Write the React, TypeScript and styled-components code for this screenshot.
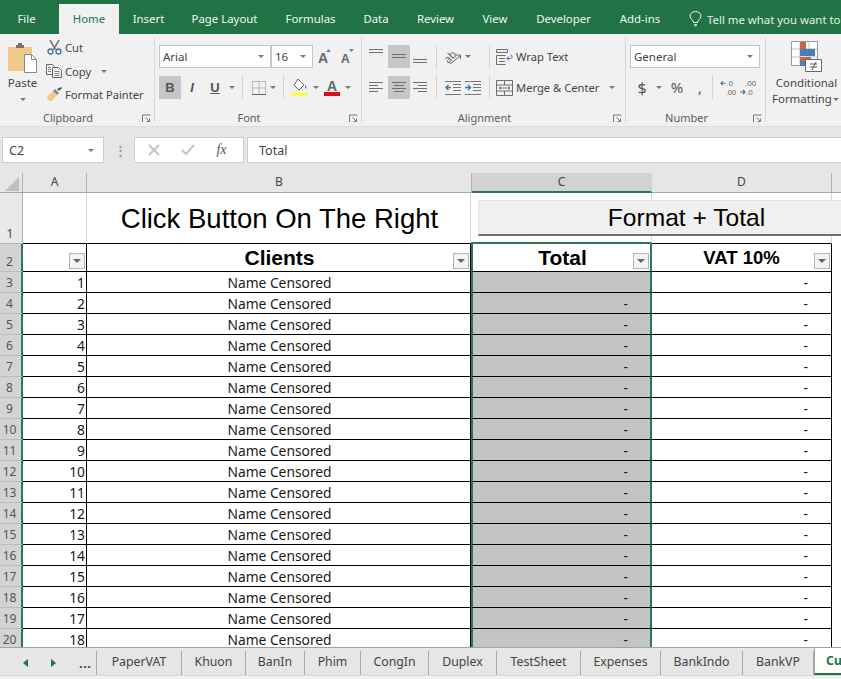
import React from "react";
import styled, { createGlobalStyle } from "styled-components";

const UI_FONT = `"Noto Sans", "Open Sans", sans-serif`;
const GREEN = "#217346";
const SELECT_GREEN = "#2f7653";

const Global = createGlobalStyle`
  html, body { margin: 0; padding: 0; height: 100%; overflow: hidden; background: #f1f1f1; }
  * { box-sizing: border-box; }
`;

const Page = styled.div`
  width: 841px;
  height: 679px;
  overflow: hidden;
  display: flex;
  flex-direction: column;
  font-family: ${UI_FONT};
  color: #444;
`;

/* ---------- title tabs ---------- */
const TabBar = styled.div`
  height: 34px;
  flex: none;
  background: ${GREEN};
  display: flex;
  align-items: flex-end;
  white-space: nowrap;
  overflow: hidden;
`;

const MenuTab = styled.div<{ $w: number; $active?: boolean; $after?: number }>`
  width: ${(p) => p.$w}px;
  height: 30px;
  flex: none;
  margin-right: ${(p) => p.$after ?? 0}px;
  text-align: center;
  font-size: 11.4px;
  line-height: 29px;
  color: ${(p) => (p.$active ? GREEN : "#f2f7f4")};
  background: ${(p) => (p.$active ? "#f1f1f1" : "transparent")};
`;

const TellMe = styled.div`
  display: flex;
  align-items: center;
  gap: 5px;
  height: 30px;
  margin-left: 15px;
  font-size: 11.4px;
  color: #e6f0ea;
`;

/* ---------- ribbon ---------- */
const Ribbon = styled.div`
  height: 93px;
  flex: none;
  background: #f1f1f1;
  border-bottom: 1px solid #dcdcdc;
  display: flex;
  overflow: hidden;
`;

const Group = styled.div<{ $w: number }>`
  position: relative;
  width: ${(p) => p.$w}px;
  height: 84px;
  margin-top: 4px;
  flex: none;
  border-right: 1px solid #d6d6d6;
`;

const GroupBody = styled.div`
  height: 72px;
  display: flex;
`;

const GroupLabel = styled.div`
  height: 12px;
  padding-right: 18px;
  line-height: 16px;
  font-size: 11px;
  text-align: center;
  color: #5c5c5c;
`;

const Launcher = styled.svg`
  position: absolute;
  right: 3px;
  bottom: -1px;
`;

const ToolStack = styled.div<{ $left: number }>`
  padding: 7px 0 0 ${(p) => p.$left}px;
  display: flex;
  flex-direction: column;
  gap: 8px;
`;

const ToolRow = styled.div`
  height: 23px;
  display: flex;
  align-items: center;
`;

const Tool = styled.div<{ $w: number; $on?: boolean }>`
  width: ${(p) => p.$w}px;
  height: 23px;
  flex: none;
  display: flex;
  align-items: center;
  justify-content: center;
  background: ${(p) => (p.$on ? "#c6c6c6" : "transparent")};
`;

const Caret = styled.span<{ $w?: number }>`
  width: ${(p) => p.$w ?? 10}px;
  flex: none;
  display: flex;
  justify-content: center;
  &::before {
    content: "";
    border-left: 3px solid transparent;
    border-right: 3px solid transparent;
    border-top: 3px solid #777;
  }
`;

const Divider = styled.span<{ $gapL: number; $gapR: number }>`
  width: 1px;
  height: 23px;
  flex: none;
  margin: 0 ${(p) => p.$gapR}px 0 ${(p) => p.$gapL}px;
  background: #d2d2d2;
`;

const ComboBox = styled.div<{ $w: number }>`
  width: ${(p) => p.$w}px;
  height: 23px;
  flex: none;
  display: flex;
  align-items: center;
  justify-content: space-between;
  padding: 0 6px 0 3px;
  background: #fff;
  border: 1px solid #c6c6c6;
  font-size: 11.5px;
  color: #444;
`;

const PasteButton = styled.div`
  width: 45px;
  flex: none;
  padding-top: 4px;
  display: flex;
  flex-direction: column;
  align-items: center;
  font-size: 11.5px;
  line-height: 16px;
`;

const PasteText = styled.span`
  margin-top: 2px;
  margin-bottom: 7px;
`;

const ClipList = styled.div`
  margin-top: -2px;
  display: flex;
  flex-direction: column;
`;

const ClipItem = styled.div`
  height: 23.5px;
  display: flex;
  align-items: center;
  font-size: 11.2px;
  white-space: nowrap;
`;

const ClipIcon = styled.span`
  width: 20px;
  flex: none;
  display: flex;
  justify-content: center;
  padding-right: 2px;
`;

const WideLabel = styled.span`
  font-size: 11.2px;
  white-space: nowrap;
  margin-left: 3px;
`;

const BigButton = styled.div`
  width: 75px;
  padding: 7px 0 0 6px;
  display: flex;
  flex-direction: column;
  align-items: center;
  font-size: 11.4px;
  line-height: 16px;
  white-space: nowrap;
`;

const BigIcon = styled.svg`
  margin-bottom: 3px;
`;

const BigLine = styled.span`
  display: flex;
  align-items: center;
`;

const MathGlyph = styled.span<{ $size: number }>`
  font-size: ${(p) => p.$size}px;
  line-height: 1;
  color: #555;
`;

const FontLetter = styled.span<{ $italic?: boolean; $under?: boolean }>`
  font-family: "Liberation Sans", Arial, sans-serif;
  font-size: 13px;
  font-weight: 700;
  font-style: ${(p) => (p.$italic ? "italic" : "normal")};
  text-decoration: ${(p) => (p.$under ? "underline" : "none")};
  color: #555;
`;

const OrientSvg = styled.svg`
  overflow: visible;
`;

/* ---------- formula bar ---------- */
const FormulaBar = styled.div`
  height: 46px;
  flex: none;
  background: #e6e6e6;
  padding: 10px 0 10px 2px;
  display: flex;
`;

const FieldBox = styled.div`
  background: #fff;
  border: 1px solid #d0d0d0;
  display: flex;
  align-items: center;
  font-size: 12.5px;
  color: #444;
`;

const NameBox = styled(FieldBox)`
  width: 102px;
  justify-content: space-between;
  padding: 0 7px 0 6px;
`;

const Grip = styled.div`
  width: 30px;
  display: flex;
  justify-content: center;
  align-items: center;
  padding-left: 2px;
  font-size: 13px;
  color: #9c9c9c;
  font-weight: 700;
`;

const FxBox = styled(FieldBox)`
  width: 110px;
  justify-content: space-around;
  padding: 0 6px 0 3px;
  margin-right: 3px;
`;

const FormulaInput = styled(FieldBox)`
  flex: 1;
  padding-left: 11px;
  border-right: none;
`;

const FxText = styled.span`
  font-family: "Liberation Serif", serif;
  font-style: italic;
  font-weight: 400;
  font-size: 14px;
  color: #555;
`;

/* ---------- sheet ---------- */
const Sheet = styled.div`
  height: 474px;
  flex: none;
  overflow: hidden;
  background: #fff;
`;

const ColHeaders = styled.div`
  height: 20px;
  display: flex;
  background: #e6e6e6;
  border-bottom: 1px solid #a6a6a6;
  font-size: 12px;
  color: #444;
`;

const ColHead = styled.div<{ $w: number; $on?: boolean }>`
  width: ${(p) => p.$w}px;
  flex: none;
  height: ${(p) => (p.$on ? "20px" : "19px")};
  line-height: 18px;
  text-align: center;
  border-right: 1px solid ${(p) => (p.$on ? "#d2d2d2" : "#b4b4b4")};
  background: ${(p) => (p.$on ? "#d2d2d2" : "transparent")};
  border-bottom: ${(p) => (p.$on ? `2px solid ${SELECT_GREEN}` : "none")};
`;

const CornerHead = styled(ColHead)`
  display: flex;
  align-items: flex-end;
  justify-content: flex-end;
  padding: 0 3px 1px 0;
`;

const Row = styled.div<{ $h: number }>`
  height: ${(p) => p.$h}px;
  display: flex;
  position: relative;
`;

const RowHead = styled.div<{ $on?: boolean }>`
  width: 23px;
  flex: none;
  display: flex;
  align-items: flex-end;
  justify-content: center;
  font-size: 12px;
  line-height: 18px;
  padding-right: 2px;
  color: ${(p) => (p.$on ? "#555" : "#444")};
  background: ${(p) => (p.$on ? "#d3d3d3" : "#e9e9e9")};
  border-right: ${(p) => (p.$on ? `2px solid ${SELECT_GREEN}` : "1px solid #b4b4b4")};
  border-bottom: 1px solid ${(p) => (p.$on ? "#bcbcbc" : "#b4b4b4")};
`;

const Cell = styled.div<{ $w: number; $soft?: boolean }>`
  position: relative;
  width: ${(p) => p.$w}px;
  flex: none;
  border-right: 1px solid ${(p) => (p.$soft ? "#d4d4d4" : "#000")};
  border-bottom: 1px solid #000;
  display: flex;
  align-items: center;
  justify-content: center;
  font-size: 13.8px;
  color: #1a1a1a;
  white-space: nowrap;
`;

const NameCell = styled(Cell)`
  padding-left: 2px;
`;

const TitleCell = styled(NameCell)`
  padding-top: 2px;
`;

const NumberCell = styled(Cell)`
  justify-content: flex-end;
  padding-right: 1px;
`;

const AmountCell = styled(Cell)`
  justify-content: flex-end;
  padding-right: 23px;
`;

const SelectedCell = styled(AmountCell)<{ $fill?: boolean }>`
  padding-right: 22px;
  background: ${(p) => (p.$fill ? "#c4c4c4" : "#fff")};
  border-left: 2px solid ${SELECT_GREEN};
  border-right: 2px solid ${SELECT_GREEN};
`;

const HeadCentered = styled(SelectedCell)`
  justify-content: center;
  padding: 0 0 0 2px;
`;

const TopOfSelection = styled(Cell)`
  border-bottom: 2px solid ${SELECT_GREEN};
`;

const HeadText = styled.span<{ $size: number }>`
  font-family: "Liberation Sans", Arial, sans-serif;
  font-weight: 700;
  font-size: ${(p) => p.$size}px;
  color: #000;
`;

const TitleText = styled.span`
  font-family: "Liberation Sans", Arial, sans-serif;
  font-size: 27.5px;
  color: #000;
`;

const FilterButton = styled.span`
  position: absolute;
  right: 1px;
  bottom: 2px;
  width: 16px;
  height: 16px;
  background: #f4f4f4;
  border: 1px solid #b4b4b4;
  display: flex;
  align-items: center;
  justify-content: center;
  &::before {
    content: "";
    border-left: 4px solid transparent;
    border-right: 4px solid transparent;
    border-top: 4px solid #666;
  }
`;

const MacroButton = styled.div`
  position: absolute;
  left: 478px;
  top: 7px;
  width: 416px;
  height: 36px;
  display: flex;
  align-items: center;
  justify-content: center;
  background: #f0f0f0;
  border-top: 1px solid #e4e4e4;
  border-left: 1px solid #e4e4e4;
  border-bottom: 2px solid #6e6e6e;
  font-family: "Liberation Sans", Arial, sans-serif;
  font-size: 24.6px;
  color: #000;
`;

/* ---------- sheet tabs ---------- */
const SheetTabs = styled.div`
  height: 28px;
  flex: none;
  background: #e6e6e6;
  border-top: 1px solid #a2a2a2;
  display: flex;
  overflow: hidden;
`;

const TabNav = styled.div`
  width: 97px;
  height: 24px;
  flex: none;
  display: flex;
  align-items: center;
  padding-left: 23px;
  color: ${GREEN};
  font-size: 9px;
  border-right: 1px solid #a8a8a8;
  margin-top: 3px;
`;

const NavArrow = styled.span<{ $dir: "l" | "r" }>`
  width: 28px;
  &::before {
    content: "";
    display: inline-block;
    border-top: 4px solid transparent;
    border-bottom: 4px solid transparent;
    ${(p) => (p.$dir === "l" ? `border-right: 5px solid ${GREEN};` : `border-left: 5px solid ${GREEN};`)}
  }
`;

const NavDots = styled.span`
  font-size: 13px;
  font-weight: 700;
  color: #444;
  letter-spacing: 0.5px;
`;

const SheetTab = styled.div<{ $w: number }>`
  width: ${(p) => p.$w}px;
  height: 24px;
  margin-top: 3px;
  flex: none;
  text-align: center;
  font-size: 12.3px;
  line-height: 22px;
  color: #444;
  border-right: 1px solid #a8a8a8;
`;

const ActiveSheet = styled.div`
  flex: 1;
  height: 27px;
  background: #fff;
  border-left: 1px solid #a2a2a2;
  border-bottom: 2px solid ${GREEN};
  padding-left: 11px;
  font-size: 12.3px;
  line-height: 26px;
  font-weight: 700;
  color: ${GREEN};
  white-space: nowrap;
`;

const StatusStrip = styled.div`
  flex: 1;
  background: #f1f1f1;
  border-top: 1px solid #d8d8d8;
`;

/* ---------- drawn icons ---------- */
const LauncherIcon = () => (
  <Launcher width="9" height="9" viewBox="0 0 9 9" fill="none" stroke="#777">
    <path d="M8.5 1H.5v7" />
    <path d="M3.5 3.5 7.5 7.5M7.5 4.5v3h-3" />
  </Launcher>
);

const Bulb = () => (
  <svg width="13" height="16" viewBox="0 0 13 16" fill="none" stroke="#eef5f0">
    <path d="M4.5 11.5C4.5 9 1 8 1 5a5.500 4.500 0 0 1 11 0c0 3-3.500 4-3.500 6.500z" />
    <path d="M5 13.500h3M5.500 15h2" />
  </svg>
);

const PasteIcon = () => (
  <svg width="29" height="31" viewBox="0 0 29 31">
    <path d="M0 5h24v24H0z" fill="#efca8b" />
    <path d="M8 3h2V1h4v2h2v3H8z" fill="#747474" />
    <path d="M16.500 12.500h7l5 5v13h-12z" fill="#fff" stroke="#8a8a8a" />
    <path d="M23.500 12.500v5h5" fill="none" stroke="#8a8a8a" />
  </svg>
);

const ScissorsIcon = () => (
  <svg width="15" height="15" viewBox="0 0 15 15" fill="none">
    <path d="M3 0 8.500 9.500M12 0 6.500 9.500" stroke="#777" strokeWidth="1.500" />
    <circle cx="3.500" cy="11.500" r="2.500" stroke="#44709f" strokeWidth="1.300" />
    <circle cx="11.500" cy="11.500" r="2.500" stroke="#44709f" strokeWidth="1.300" />
  </svg>
);

const CopyIcon = () => (
  <svg width="16" height="14" viewBox="0 0 16 14" fill="#f1f1f1" stroke="#666">
    <path d="M.5.500h6l2 2v8h-8z" />
    <path d="M6.500 3.500h6l3 3v7h-9z" />
    <path d="M2 3.500h3M2 5.500h3M2 7.500h3M8.500 7.500h5M8.500 9.500h5M8.500 11.500h5" strokeWidth=".8" />
  </svg>
);

const BrushIcon = () => (
  <svg width="17" height="15" viewBox="0 0 17 15">
    <path d="M0 11 7 4l4 4-5 6H3l-1-2z" fill="#efca8b" />
    <path d="M7 4l4 4 2-2-4-4z" fill="#888" />
    <path d="M11 2l2 2 3-3-1-1z" fill="#555" />
  </svg>
);

const GrowFont = ({ up }: { up: boolean }) => (
  <svg width="14" height="17" viewBox="0 0 14 17">
    <text
      x="0"
      y="15"
      fontFamily="Liberation Sans, sans-serif"
      fontSize={up ? 14 : 12}
      fontWeight="700"
      fill="#666"
    >
      A
    </text>
    <path d={up ? "M8 4l2.500-3L13 4z" : "M8 1l2.500 3L13 1z"} fill="#5b87b4" />
  </svg>
);

const BordersIcon = () => (
  <svg width="14" height="14" viewBox="0 0 14 14" fill="none" stroke="#8a8a8a" strokeDasharray="1 1">
    <path d="M.5.500h13M.5 7h13M.5.500v13M7 .500v13M13.500.500v13" />
    <path d="M0 13.500h14" stroke="#666" strokeDasharray="none" />
  </svg>
);

const FillIcon = () => (
  <svg width="18" height="19" viewBox="0 0 18 19">
    <path d="M7 1l6 6-5 5-5-5z" fill="#fff" stroke="#666" />
    <path d="M14 7c1.500 1.500 2 3 1 4-1-1-1-3-1-4z" fill="#3f75a8" />
    <path d="M0 15h16v3H0z" fill="#ffff35" />
  </svg>
);

const FontColorIcon = () => (
  <svg width="16" height="18" viewBox="0 0 16 18">
    <text x="3" y="12" fontFamily="Liberation Sans, sans-serif" fontSize="14" fontWeight="700" fill="#666">
      A
    </text>
    <path d="M0 13h16v4H0z" fill="#dd0c1c" />
  </svg>
);

const lineSets: Record<string, string> = {
  top: "M0 1.500h14M0 4.500h14",
  middle: "M1 6.500h14M1 9.500h14",
  bottom: "M0 11.500h14M0 14.500h14",
  left: "M0 3.500h14M0 6.500h9M0 9.500h14M0 12.500h9",
  center: "M1 3.500h14M3 6.500h10M1 9.500h14M3 12.500h10",
  right: "M0 3.500h14M5 6.500h9M0 9.500h14M5 12.500h9",
};

const AlignIcon = ({ kind }: { kind: string }) => (
  <svg width="16" height="17" viewBox="0 0 16 17" fill="none" stroke="#6e6e6e">
    <path d={lineSets[kind]} />
  </svg>
);

const OrientIcon = () => (
  <OrientSvg width="18" height="20" viewBox="0 0 18 20" fill="none">
    <text
      x="0"
      y="13"
      fontSize="11"
      fontFamily="Noto Sans, sans-serif"
      fill="#666"
      transform="rotate(-45 7 10)"
    >
      ab
    </text>
    <path d="M6 17 16 9M12 8h4.500v4" stroke="#666" />
  </OrientSvg>
);

const IndentIcon = ({ out }: { out: boolean }) => (
  <svg width="16" height="16" viewBox="0 0 16 16" fill="none" stroke="#777">
    <path d="M0 1.500h16M8 4.500h8M8 7.500h8M8 10.500h8M0 14.500h16" />
    <path
      d={out ? "M6 7.500H1M3.500 5 1 7.500 3.500 10" : "M0 7.500h5M3 5l2.500 2.500L3 10"}
      stroke="#3f75a8"
      strokeWidth="1.400"
    />
  </svg>
);

const WrapIcon = () => (
  <svg width="17" height="16" viewBox="0 0 17 16" fill="none" stroke="#6e6e6e">
    <path d="M.5.500h11v3H.5zM.5 6.500h9M.5 6.500v9h9M3 9.500h6M3 12.500h6" />
    <path d="M11 9.500h3.500c2 0 2-3.500 0-3.500M13 7.500l-2 2 2 2" stroke="#3f75a8" />
  </svg>
);

const MergeIcon = () => (
  <svg width="17" height="16" viewBox="0 0 17 16" fill="none" stroke="#6e6e6e">
    <path d="M.5.500h16v15H.5zM.5 5h16M.5 11h16M8.500.500V5M8.500 11v4.500" />
    <path d="M3 8h11M5 6.500 3 8l2 1.500M12 6.500 14 8l-2 1.500" strokeWidth=".9" />
  </svg>
);

const DecimalIcon = ({ more }: { more: boolean }) => (
  <svg width="17" height="19" viewBox="0 0 17 19">
    <text x={more ? 7 : 6} y="8" fontSize="8" fontFamily="Liberation Sans, sans-serif" fill="#666">
      {more ? ".0" : ".00"}
    </text>
    <text x={more ? 6 : 7} y="17" fontSize="8" fontFamily="Liberation Sans, sans-serif" fill="#666">
      {more ? ".00" : ".0"}
    </text>
    <path
      d={more ? "M6 5H1M3 3 1 5l2 2" : "M1 14h5M4 12l2 2-2 2"}
      fill="none"
      stroke="#3f75a8"
      strokeWidth="1.200"
    />
  </svg>
);

const ConditionalIcon = () => (
  <BigIcon width="31" height="31" viewBox="0 0 31 31">
    <path d="M.5.500h26v24H.5z" fill="#fff" stroke="#999" />
    <path d="M9 .500v24M18 .500v24M.5 8h26M.5 16h26" stroke="#bbb" fill="none" />
    <path d="M9 1h6v7H9z" fill="#c8654a" />
    <path d="M9 8h15v7H9z" fill="#4a7ebb" />
    <path d="M9 16h11v4H9z" fill="#c8654a" />
    <path d="M9 20h6v5H9z" fill="#4a7ebb" />
    <path d="M14.500 18.500h16v12h-16z" fill="#fff" stroke="#666" />
    <path d="M19 23h7M19 26h7M25 21l-4 8" stroke="#555" fill="none" />
  </BigIcon>
);

const CheckMark = () => (
  <svg width="14" height="12" viewBox="0 0 14 12" fill="none" stroke="#c4c4c4" strokeWidth="2">
    <path d="M1 6l4 4 8-9" />
  </svg>
);

const CrossMark = () => (
  <svg width="12" height="12" viewBox="0 0 12 12" fill="none" stroke="#c4c4c4" strokeWidth="2">
    <path d="M1 1l10 10M11 1 1 11" />
  </svg>
);

const SelectAll = () => (
  <svg width="14" height="14" viewBox="0 0 14 14">
    <path d="M14 0v14H0z" fill="#c0c0c0" />
  </svg>
);

/* ---------- data ---------- */
const menu = [
  { label: "File", w: 53, after: 6 },
  { label: "Home", w: 60, active: true },
  { label: "Insert", w: 59 },
  { label: "Page Layout", w: 93 },
  { label: "Formulas", w: 79 },
  { label: "Data", w: 52 },
  { label: "Review", w: 67 },
  { label: "View", w: 52 },
  { label: "Developer", w: 85 },
  { label: "Add-ins", w: 68 },
];

const sheets = [
  { name: "PaperVAT", w: 85 },
  { name: "Khuon", w: 64 },
  { name: "BanIn", w: 59 },
  { name: "Phim", w: 56 },
  { name: "CongIn", w: 68 },
  { name: "Duplex", w: 68 },
  { name: "TestSheet", w: 84 },
  { name: "Expenses", w: 80 },
  { name: "BankIndo", w: 82 },
  { name: "BankVP", w: 71 },
];

const dataRows = Array.from({ length: 18 }, (_, i) => i + 1);

const COL = { a: 64, b: 384, c: 181, d: 180, e: 40 };

export default function App() {
  return (
    <Page>
      <Global />
      <TabBar>
        {menu.map((m) => (
          <MenuTab key={m.label} $w={m.w} $after={m.after} $active={m.active}>
            {m.label}
          </MenuTab>
        ))}
        <TellMe>
          <Bulb />
          Tell me what you want to do
        </TellMe>
      </TabBar>

      <Ribbon>
        <Group $w={155}>
          <GroupBody>
            <PasteButton>
              <PasteIcon />
              <PasteText>Paste</PasteText>
              <Caret />
            </PasteButton>
            <ClipList>
              <ClipItem>
                <ClipIcon>
                  <ScissorsIcon />
                </ClipIcon>
                Cut
              </ClipItem>
              <ClipItem>
                <ClipIcon>
                  <CopyIcon />
                </ClipIcon>
                Copy
                <Caret $w={26} />
              </ClipItem>
              <ClipItem>
                <ClipIcon>
                  <BrushIcon />
                </ClipIcon>
                Format Painter
              </ClipItem>
            </ClipList>
          </GroupBody>
          <GroupLabel>Clipboard</GroupLabel>
          <LauncherIcon />
        </Group>

        <Group $w={207}>
          <GroupBody>
            <ToolStack $left={4}>
              <ToolRow>
                <ComboBox $w={112}>
                  Arial
                  <Caret $w={6} />
                </ComboBox>
                <ComboBox $w={42}>
                  16
                  <Caret $w={6} />
                </ComboBox>
                <Tool $w={23}>
                  <GrowFont up />
                </Tool>
                <Tool $w={23}>
                  <GrowFont up={false} />
                </Tool>
              </ToolRow>
              <ToolRow>
                <Tool $w={22} $on>
                  <FontLetter>B</FontLetter>
                </Tool>
                <Tool $w={22}>
                  <FontLetter $italic>I</FontLetter>
                </Tool>
                <Tool $w={24}>
                  <FontLetter $under>U</FontLetter>
                </Tool>
                <Caret $w={10} />
                <Divider $gapL={5} $gapR={8} />
                <Tool $w={15}>
                  <BordersIcon />
                </Tool>
                <Caret $w={14} />
                <Divider $gapL={3} $gapR={7} />
                <Tool $w={18}>
                  <FillIcon />
                </Tool>
                <Caret $w={14} />
                <Tool $w={18}>
                  <FontColorIcon />
                </Tool>
                <Caret $w={14} />
              </ToolRow>
            </ToolStack>
          </GroupBody>
          <GroupLabel>Font</GroupLabel>
          <LauncherIcon />
        </Group>

        <Group $w={264}>
          <GroupBody>
            <ToolStack $left={4}>
              <ToolRow>
                <Tool $w={22}>
                  <AlignIcon kind="top" />
                </Tool>
                <Tool $w={22} $on>
                  <AlignIcon kind="middle" />
                </Tool>
                <Tool $w={22}>
                  <AlignIcon kind="bottom" />
                </Tool>
                <Divider $gapL={4} $gapR={7} />
                <Tool $w={18}>
                  <OrientIcon />
                </Tool>
                <Caret $w={12} />
                <Divider $gapL={15} $gapR={6} />
                <WrapIcon />
                <WideLabel>Wrap Text</WideLabel>
              </ToolRow>
              <ToolRow>
                <Tool $w={22}>
                  <AlignIcon kind="left" />
                </Tool>
                <Tool $w={22} $on>
                  <AlignIcon kind="center" />
                </Tool>
                <Tool $w={22}>
                  <AlignIcon kind="right" />
                </Tool>
                <Divider $gapL={4} $gapR={7} />
                <Tool $w={18}>
                  <IndentIcon out />
                </Tool>
                <Tool $w={22}>
                  <IndentIcon out={false} />
                </Tool>
                <Divider $gapL={5} $gapR={6} />
                <MergeIcon />
                <WideLabel>Merge &amp; Center</WideLabel>
                <Caret $w={26} />
              </ToolRow>
            </ToolStack>
          </GroupBody>
          <GroupLabel>Alignment</GroupLabel>
          <LauncherIcon />
        </Group>

        <Group $w={140}>
          <GroupBody>
            <ToolStack $left={4}>
              <ToolRow>
                <ComboBox $w={130}>
                  General
                  <Caret $w={6} />
                </ComboBox>
              </ToolRow>
              <ToolRow>
                <Tool $w={24}>
                  <MathGlyph $size={16}>$</MathGlyph>
                </Tool>
                <Caret $w={10} />
                <Tool $w={26}>
                  <MathGlyph $size={15}>%</MathGlyph>
                </Tool>
                <Tool $w={20}>
                  <MathGlyph $size={15}>,</MathGlyph>
                </Tool>
                <Divider $gapL={2} $gapR={7} />
                <Tool $w={16}>
                  <DecimalIcon more />
                </Tool>
                <Tool $w={22}>
                  <DecimalIcon more={false} />
                </Tool>
              </ToolRow>
            </ToolStack>
          </GroupBody>
          <GroupLabel>Number</GroupLabel>
          <LauncherIcon />
        </Group>

        <BigButton>
          <ConditionalIcon />
          <span>Conditional</span>
          <BigLine>
            Formatting
            <Caret $w={9} />
          </BigLine>
        </BigButton>
      </Ribbon>

      <FormulaBar>
        <NameBox>
          C2
          <Caret />
        </NameBox>
        <Grip>⋮</Grip>
        <FxBox>
          <CrossMark />
          <CheckMark />
          <FxText>fx</FxText>
        </FxBox>
        <FormulaInput>Total</FormulaInput>
      </FormulaBar>

      <Sheet>
        <ColHeaders>
          <CornerHead $w={23}>
            <SelectAll />
          </CornerHead>
          <ColHead $w={COL.a}>A</ColHead>
          <ColHead $w={COL.b + 1}>B</ColHead>
          <ColHead $w={COL.c - 1} $on>
            C
          </ColHead>
          <ColHead $w={COL.d}>D</ColHead>
          <ColHead $w={COL.e} />
        </ColHeaders>

        <Row $h={51}>
          <RowHead>1</RowHead>
          <Cell $w={COL.a} $soft />
          <TitleCell $w={COL.b} $soft>
            <TitleText>Click Button On The Right</TitleText>
          </TitleCell>
          <TopOfSelection $w={COL.c} $soft />
          <Cell $w={COL.d} $soft />
          <MacroButton>Format + Total</MacroButton>
        </Row>

        <Row $h={28}>
          <RowHead $on>2</RowHead>
          <Cell $w={COL.a}>
            <FilterButton />
          </Cell>
          <NameCell $w={COL.b}>
            <HeadText $size={21}>Clients</HeadText>
            <FilterButton />
          </NameCell>
          <HeadCentered $w={COL.c}>
            <HeadText $size={21}>Total</HeadText>
            <FilterButton />
          </HeadCentered>
          <Cell $w={COL.d}>
            <HeadText $size={18.5}>VAT 10%</HeadText>
            <FilterButton />
          </Cell>
        </Row>

        {dataRows.map((n) => (
          <Row $h={21} key={n}>
            <RowHead $on>{n + 2}</RowHead>
            <NumberCell $w={COL.a}>{n}</NumberCell>
            <NameCell $w={COL.b}>Name Censored</NameCell>
            <SelectedCell $w={COL.c} $fill>
              {n > 1 ? "-" : ""}
            </SelectedCell>
            <AmountCell $w={COL.d}>-</AmountCell>
          </Row>
        ))}
      </Sheet>

      <SheetTabs>
        <TabNav>
          <NavArrow $dir="l" />
          <NavArrow $dir="r" />
          <NavDots>...</NavDots>
        </TabNav>
        {sheets.map((s) => (
          <SheetTab key={s.name} $w={s.w}>
            {s.name}
          </SheetTab>
        ))}
        <ActiveSheet>Cu</ActiveSheet>
      </SheetTabs>
      <StatusStrip />
    </Page>
  );
}
